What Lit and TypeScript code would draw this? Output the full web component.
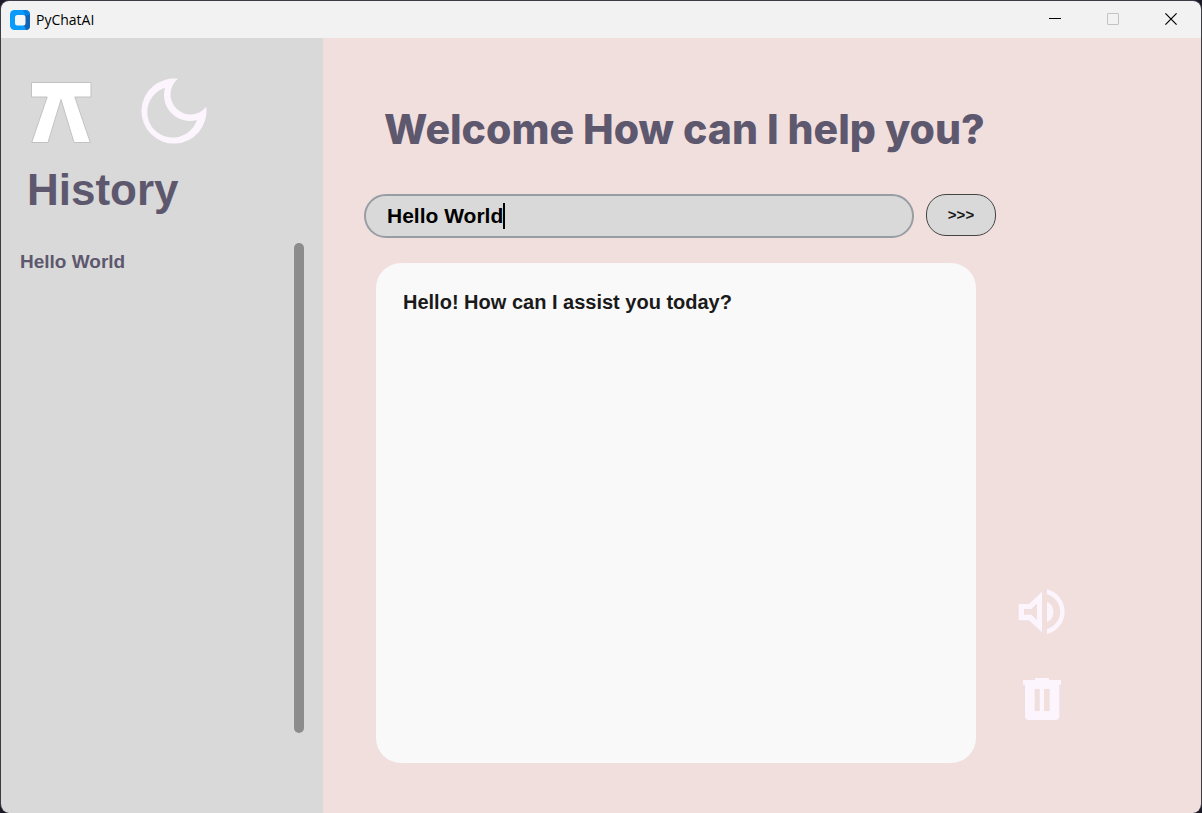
import { LitElement, html, css } from "lit";
import { customElement, state } from "lit/decorators.js";

@customElement("title-bar")
class TitleBar extends LitElement {
  static styles = css`
    :host {
      display: flex;
      align-items: center;
      height: 37px;
      background: #f2f2f2;
      padding: 0 1px 0 9px;
    }
    .name {
      flex: 1;
      margin-left: 6px;
      font: 14px/20px "Open Sans", "Noto Sans", sans-serif;
      color: #000;
    }
    .control {
      width: 58px;
      height: 37px;
      padding: 0 0 2px;
      border: 0;
      background: none;
      display: grid;
      place-items: center;
      color: #000;
    }
    .control:disabled {
      color: #c3c3c3;
    }
    svg {
      display: block;
    }
  `;

  render() {
    return html`
      <svg width="20" height="20" viewBox="0 0 20 20" aria-hidden="true">
        <rect width="20" height="20" rx="4.500" fill="#0a9bfd" />
        <path d="M15.500 3L20 4v12a4 4 0 0 1-4 4l-2-5z" fill="#1263b4" />
        <path d="M13 0h2.500a4.500 4.500 0 0 1 4.500 4.500l-4.500 1.500z" fill="#0b7fe0" />
        <rect x="5" y="5" width="10.500" height="10.500" rx="2.500" fill="#f4f6f8" />
      </svg>
      <span class="name">PyChatAI</span>
      <button class="control" aria-label="Minimize">
        <svg width="12" height="12" viewBox="0 0 12 12"><path d="M0 5.500h12" stroke="currentColor" /></svg>
      </button>
      <button class="control" aria-label="Maximize" disabled>
        <svg width="12" height="12" viewBox="0 0 12 12">
          <rect x=".5" y=".5" width="11" height="11" rx=".5" fill="none" stroke="currentColor" />
        </svg>
      </button>
      <button class="control" aria-label="Close">
        <svg width="12" height="12" viewBox="0 0 12 12">
          <path d="M.4.4l11.200 11.200M11.600.4L.4 11.600" stroke="currentColor" stroke-width="1.200" />
        </svg>
      </button>
    `;
  }
}

@customElement("history-panel")
class HistoryPanel extends LitElement {
  static styles = css`
    :host {
      display: flex;
      flex-direction: column;
      box-sizing: border-box;
      width: 322px;
      padding: 40px 19px 80px;
      background: #d9d9d9;
      color: #5e586e;
      font-family: "Liberation Sans", Arial, sans-serif;
    }
    .brand {
      display: flex;
      align-items: flex-end;
      gap: 49px;
      margin-left: 11px;
    }
    .theme {
      padding: 0;
      border: 0;
      background: none;
    }
    svg {
      display: block;
    }
    h2 {
      margin: 20px 0 27px 7px;
      font-size: 44px;
      line-height: 52px;
    }
    .scroller {
      flex: 1;
      display: flex;
      justify-content: space-between;
    }
    ul {
      margin: 0;
      padding: 7px 0;
      list-style: none;
      font-size: 19px;
      font-weight: 700;
      line-height: 24px;
    }
    .thumb {
      width: 10px;
      border-radius: 5px;
      background: #8c8c8c;
    }
  `;

  @state() items = ["Hello World"];

  render() {
    return html`
      <div class="brand">
        <svg width="61" height="62" viewBox="0 0 61 62" aria-hidden="true">
          <path
            d="M.5.500H60V15H43.800L59.300 60.500H43L30 17.500 17 60.500H.7L16.200 15H.5z"
            fill="#fff" stroke="#c2c2c2" stroke-width="1"
          />
        </svg>
        <button class="theme" aria-label="Toggle dark mode">
          <svg width="66" height="66" viewBox="0 0 66 66" fill="#fcf5fd">
            <path
              fill-rule="evenodd"
              d="M37 .8A32.500 32.500 0 1 0 65.200 28.800A20 20 0 1 1 37 .8zM24 9.800A25.500 25.500 0 1 0 56 42A26 26 0 0 1 24 9.800z"
            />
          </svg>
        </button>
      </div>
      <h2>History</h2>
      <div class="scroller">
        <ul>
          ${this.items.map((item) => html`<li>${item}</li>`)}
        </ul>
        <div class="thumb"></div>
      </div>
    `;
  }
}

@customElement("chat-panel")
class ChatPanel extends LitElement {
  static styles = css`
    :host {
      display: flex;
      flex-direction: column;
      box-sizing: border-box;
      min-width: 0;
      padding: 65px 135px 50px 41px;
      background: #f1dfde;
      font-family: "Liberation Sans", Arial, sans-serif;
    }
    h1 {
      margin: 0 0 39px 20px;
      font: 800 41px/52px Inter, sans-serif;
      color: #5e586e;
      white-space: nowrap;
    }
    form {
      display: flex;
      align-items: flex-start;
      gap: 12px;
      margin: 0 70px 25px 0;
    }
    .field {
      flex: 1;
      display: flex;
      align-items: center;
      box-sizing: border-box;
      height: 44px;
      padding: 0 21px;
      border: 2px solid #979da2;
      border-radius: 22px;
      background: #d9d9d9;
    }
    input {
      field-sizing: content;
      padding: 0;
      border: 0;
      outline: 0;
      background: none;
      font: 700 21px/26px "Liberation Sans", Arial, sans-serif;
      color: #000;
      caret-color: transparent;
    }
    .caret {
      width: 2px;
      height: 26px;
      background: #000;
    }
    .send {
      width: 70px;
      height: 42px;
      padding: 0;
      border: 1px solid #444;
      border-radius: 20px;
      background: #d9d9d9;
      font: 700 15px/20px "Liberation Sans", Arial, sans-serif;
      color: #1a1a1a;
    }
    .body {
      flex: 1;
      display: flex;
      gap: 42px;
      margin-left: 12px;
    }
    .reply {
      flex: 1;
      padding: 27px;
      border-radius: 25px;
      background: #f9f9f9;
      font-size: 20px;
      font-weight: 700;
      line-height: 24px;
      color: #1a1a1a;
    }
    .reply p {
      margin: 0;
    }
    .tools {
      display: flex;
      flex-direction: column;
      justify-content: flex-end;
      align-items: center;
      gap: 42px;
      width: 48px;
      padding-bottom: 42px;
    }
    .tool {
      padding: 0;
      border: 0;
      background: none;
    }
    svg {
      display: block;
      fill: #fcf5fd;
    }
  `;

  @state() question = "Hello World";
  @state() reply = "Hello! How can I assist you today?";

  private onInput(e: Event) {
    this.question = (e.target as HTMLInputElement).value;
  }

  render() {
    return html`
      <h1>Welcome How can I help you?</h1>
      <form @submit=${(e: Event) => e.preventDefault()}>
        <label class="field">
          <input type="text" aria-label="Question" .value=${this.question} @input=${this.onInput} />
          <span class="caret"></span>
        </label>
        <button class="send" aria-label="Send">&gt;&gt;&gt;</button>
      </form>
      <div class="body">
        <section class="reply"><p>${this.reply}</p></section>
        <div class="tools">
          <button class="tool" aria-label="Read aloud">
            <svg width="48" height="46" viewBox="0 0 48 46">
              <path
                fill-rule="evenodd"
                d="M.7 15H11L24 2.700V43.300L11 31.300H.7zM6 20V25.700H13.300L19 31V14.300L13.300 20z"
              />
              <path d="M29 12.700A11.500 11.500 0 0 1 29 33.300z" />
              <path d="M29 .3A23 23 0 0 1 29 45V40A18 18 0 0 0 29 5.300z" />
            </svg>
          </button>
          <button class="tool" aria-label="Delete">
            <svg width="38" height="44" viewBox="0 0 38 44">
              <path
                fill-rule="evenodd"
                d="M12 3V1H26V3H38V7.700H36.300V39A4 4 0 0 1 32.300 43H6A4 4 0 0 1 2 39V7.700H0V3zM11.700 12V34H16.700V12zM21 12V34H26.700V12z"
              />
            </svg>
          </button>
        </div>
      </div>
    `;
  }
}

@customElement("app-root")
class AppRoot extends LitElement {
  static styles = css`
    :host {
      display: block;
      height: 100vh;
      background: #1a1b26;
    }
    .window {
      display: flex;
      flex-direction: column;
      box-sizing: border-box;
      height: 100%;
      border: 1px solid #3c3c46;
      border-bottom: 0;
      border-radius: 9px;
      overflow: hidden;
    }
    .content {
      flex: 1;
      display: flex;
      min-height: 0;
    }
    chat-panel {
      flex: 1;
    }
  `;

  render() {
    return html`
      <div class="window">
        <title-bar></title-bar>
        <div class="content">
          <history-panel></history-panel>
          <chat-panel></chat-panel>
        </div>
      </div>
    `;
  }
}
